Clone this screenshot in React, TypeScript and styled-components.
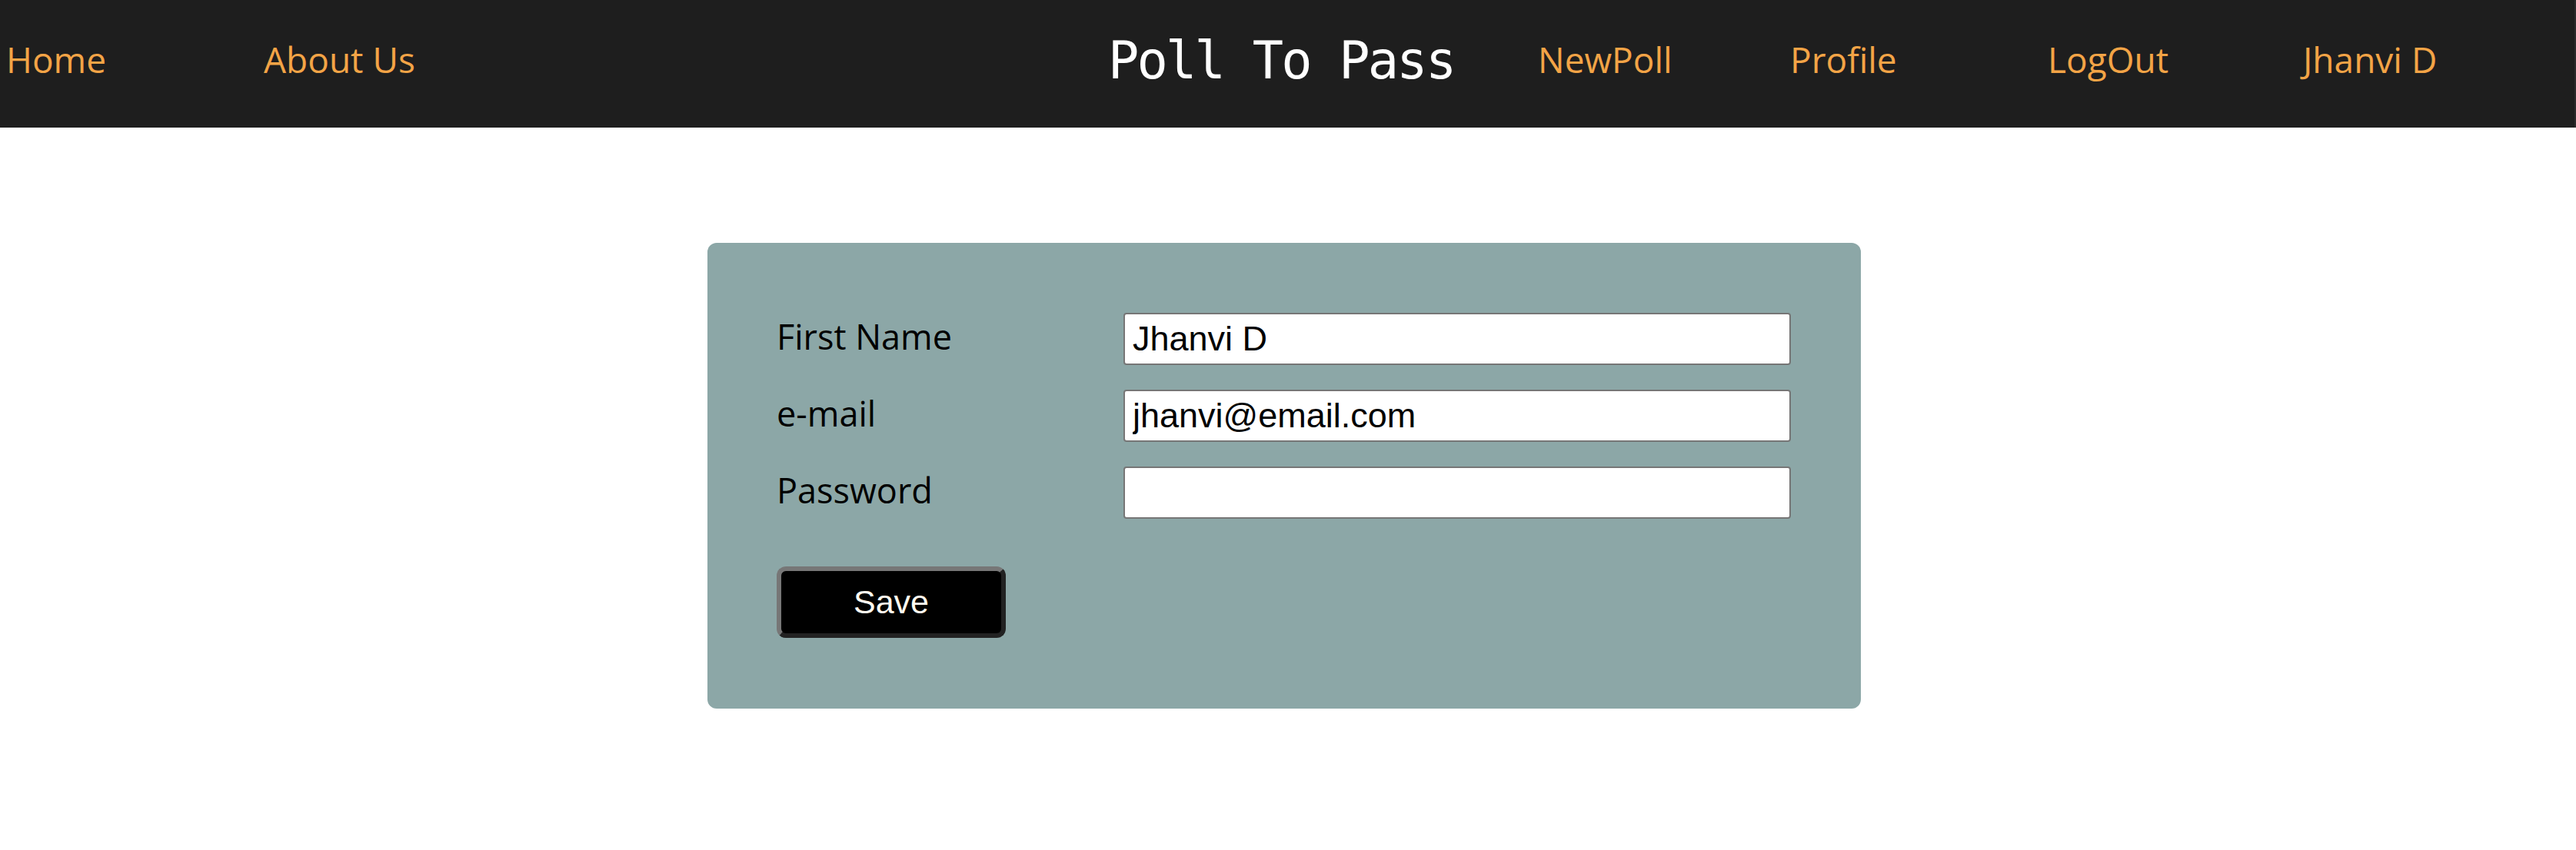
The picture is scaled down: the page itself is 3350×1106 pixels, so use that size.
import React from "react";
import styled, { createGlobalStyle } from "styled-components";

const GlobalStyle = createGlobalStyle`
  html, body {
    margin: 0;
    padding: 0;
    background: #ffffff;
  }
  * {
    box-sizing: border-box;
  }
`;

const Page = styled.div`
  width: 100%;
  min-height: 1106px;
  background: #ffffff;
`;

const NavBar = styled.nav`
  display: flex;
  align-items: center;
  height: 166px;
  padding: 0 0 13px 8px;
  background: #1e1e1e;
  border-right: 2px solid #2a2a2a;
`;

const NavLink = styled.a<{ $width?: number }>`
  flex: 0 0 ${(p) => (p.$width ? `${p.$width}px` : "auto")};
  font-family: "Open Sans", "Liberation Sans", sans-serif;
  font-size: 46px;
  color: #f3a446;
  text-decoration: none;
  white-space: nowrap;
  cursor: pointer;
`;

const Brand = styled.h1<{ $width: number }>`
  flex: 0 0 ${(p) => p.$width}px;
  margin: 0;
  padding-top: 4px;
  font-family: "DejaVu Sans Mono", "Liberation Mono", monospace;
  font-weight: 400;
  font-size: 67px;
  letter-spacing: -2.8px;
  color: #ffffff;
  white-space: nowrap;
`;

const Main = styled.main`
  display: flex;
  justify-content: center;
  padding: 150px 10px 0 0;
`;

const Card = styled.form`
  width: 1500px;
  padding: 91px 90px 92px 90px;
  background: #8ca7a7;
  border-radius: 12px;
  display: flex;
  flex-direction: column;
  align-items: flex-start;
`;

const Fields = styled.div`
  display: grid;
  grid-template-columns: 451px 868px;
  grid-auto-rows: 68px;
  row-gap: 32px;
`;

const Label = styled.label`
  align-self: start;
  font-family: "Open Sans", "Liberation Sans", sans-serif;
  font-size: 45px;
  color: #000000;
  white-space: nowrap;
`;

const Input = styled.input`
  width: 868px;
  height: 68px;
  padding: 0 10px;
  border: 2px solid #767676;
  border-radius: 4px;
  background: #ffffff;
  font-family: "Liberation Sans", Arial, sans-serif;
  font-size: 45px;
  color: #000000;
  outline: none;
`;

const SaveButton = styled.button`
  margin-top: 62px;
  width: 298px;
  height: 93px;
  border-style: solid;
  border-width: 6px;
  border-color: #777777 #222222 #222222 #777777;
  border-radius: 12px;
  background: #000000;
  color: #fffaf0;
  font-family: "Liberation Sans", Arial, sans-serif;
  font-size: 43px;
  cursor: pointer;
`;

export default function App() {
  return (
    <Page>
      <GlobalStyle />
      <NavBar>
        <NavLink $width={335}>Home</NavLink>
        <NavLink $width={1098}>About Us</NavLink>
        <Brand $width={559}>Poll To Pass</Brand>
        <NavLink $width={328}>NewPoll</NavLink>
        <NavLink $width={335}>Profile</NavLink>
        <NavLink $width={332}>LogOut</NavLink>
        <NavLink>Jhanvi D</NavLink>
      </NavBar>
      <Main>
        <Card onSubmit={(e) => e.preventDefault()}>
          <Fields>
            <Label htmlFor="firstName">First Name</Label>
            <Input id="firstName" type="text" defaultValue="Jhanvi D" />
            <Label htmlFor="email">e-mail</Label>
            <Input id="email" type="email" defaultValue="jhanvi@email.com" />
            <Label htmlFor="password">Password</Label>
            <Input id="password" type="password" defaultValue="" />
          </Fields>
          <SaveButton type="submit">Save</SaveButton>
        </Card>
      </Main>
    </Page>
  );
}
